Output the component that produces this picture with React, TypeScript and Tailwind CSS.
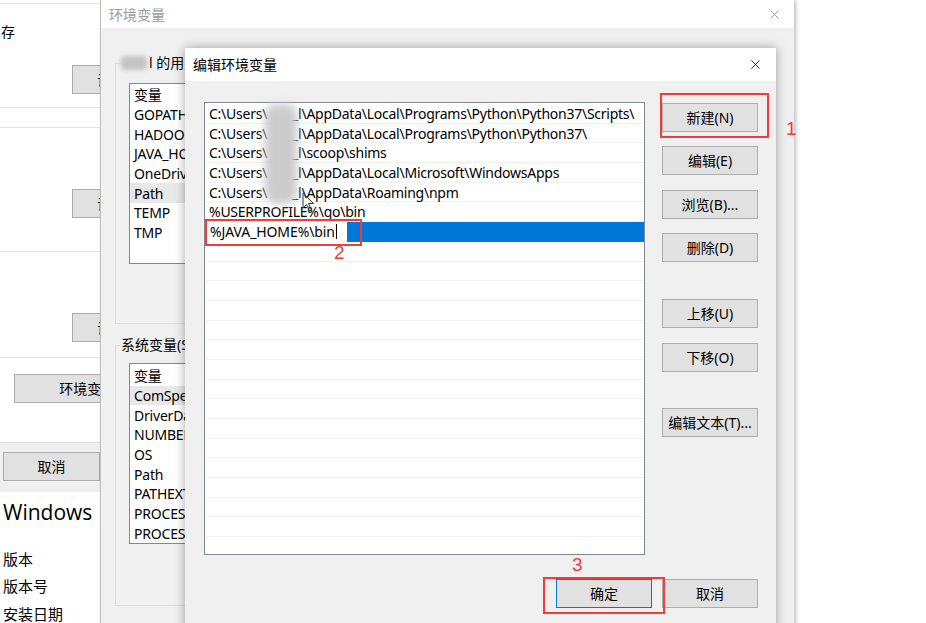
import { X } from "lucide-react";

const ui = "font-['Segoe_UI','Noto_Sans','Noto_Sans_CJK_SC',sans-serif]";

const userVars = ["变量", "GOPATH", "HADOOP_HOME", "JAVA_HOME", "OneDrive", "Path", "TEMP", "TMP"];
const sysVars = ["变量", "ComSpec", "DriverData", "NUMBER_OF_PROCESSORS", "OS", "Path", "PATHEXT", "PROCESSOR_ARCHITECTURE", "PROCESSOR_IDENTIFIER"];

const paths: { before: string; after: string }[] = [
  { before: "C:\\Users\\", after: "_l\\AppData\\Local\\Programs\\Python\\Python37\\Scripts\\" },
  { before: "C:\\Users\\", after: "_l\\AppData\\Local\\Programs\\Python\\Python37\\" },
  { before: "C:\\Users\\", after: "_l\\scoop\\shims" },
  { before: "C:\\Users\\", after: "_l\\AppData\\Local\\Microsoft\\WindowsApps" },
  { before: "C:\\Users\\", after: "_l\\AppData\\Roaming\\npm" },
  { before: "%USERPROFILE%\\go\\bin", after: "" },
];

function WinButton({ label, className = "" }: { label: string; className?: string }) {
  return (
    <div
      className={`flex items-center justify-center h-[29px] bg-[#e1e1e1] border border-[#adadad] text-[14px] text-black whitespace-nowrap ${className}`}
    >
      {label}
    </div>
  );
}

function LeftWindow() {
  return (
    <div className="absolute left-0 top-0 w-[200px] bg-white flex flex-col text-black">
      <div className="shrink-0 h-[4px] border-b border-[#e6e6e6]" />
      <div className="shrink-0 h-[104px] border-b border-[#e6e6e6] relative">
        <div className="ml-[-13px] mt-[17px] text-[14px] whitespace-nowrap">内存</div>
        <WinButton label="设置(S)..." className="absolute left-[72px] top-[61px] w-[106px]" />
      </div>
      <div className="shrink-0 h-[20px] border-b border-[#e6e6e6]" />
      <div className="shrink-0 h-[124px] border-b border-[#e6e6e6] relative">
        <WinButton label="设置(E)..." className="absolute left-[72px] top-[61px] w-[106px]" />
      </div>
      <div className="shrink-0 h-[106px] border-b border-[#e6e6e6] relative">
        <WinButton label="设置(T)..." className="absolute left-[72px] top-[61px] w-[106px]" />
      </div>
      <div className="shrink-0 h-[85px] border-b border-[#dcdcdc] pt-[16px] pl-[14px]">
        <WinButton label="环境变量(N)..." className="w-[177px]" />
      </div>
      <div className="shrink-0 h-[49px] bg-[#f0f0f0] pt-[9px] pl-[3px]">
        <WinButton label="取消" className="w-[97px]" />
      </div>
      <div className="shrink-0 pl-[3px] pt-[6px]">
        <div className="text-[21px] leading-[28px] font-['Open_Sans',sans-serif]">Windows</div>
        <div className="mt-[20px] text-[15px] leading-[27px]">版本</div>
        <div className="text-[15px] leading-[27px]">版本号</div>
        <div className="text-[15px] leading-[28px]">安装日期</div>
      </div>
    </div>
  );
}

function VarList({ items, hot, top }: { items: string[]; hot: number; top: string }) {
  return (
    <div className={`ml-[13px] w-[560px] h-[181px] bg-white border border-[#828790] ${top}`}>
      {items.map((v, i) => (
        <div
          key={i}
          className={`h-[19.7px] flex items-center pl-[4px] text-[14px] tracking-[-0.2px] ${i === hot ? "bg-[#e8e8e8]" : ""}`}
        >
          {v}
        </div>
      ))}
    </div>
  );
}

function BackDialog() {
  return (
    <div className="absolute left-[100px] top-0 w-[694px] h-[640px] bg-[#f0f0f0] border-l border-[#bdbdbd] shadow-[2px_0_4px_rgba(0,0,0,0.25)] flex flex-col">
      <div className="shrink-0 h-[28px] bg-white flex items-center justify-between pl-[8px] pr-[12px]">
        <span className="text-[14px] text-[#9a9a9a]">环境变量</span>
        <X className="w-[15px] h-[15px] text-[#8a8a8a]" strokeWidth={1.2} />
      </div>
      <div className="shrink-0 relative ml-[14px] mt-[35px] w-[620px] h-[261px] border border-[#dcdcdc]">
        <div className="absolute left-[5px] top-[-11px] bg-[#f0f0f0] pr-[2px] text-[14px] leading-[20px] flex items-center">
          <span className="inline-block w-[26px] h-[14px] mr-[2px] rounded-sm bg-[#c4c4c4] blur-[2px]" />
          l 的用户变量(U)
        </div>
        <VarList items={userVars} hot={5} top="mt-[19px] pt-[1px]" />
      </div>
      <div className="shrink-0 relative ml-[14px] mt-[21px] w-[620px] h-[261px] border border-[#dcdcdc]">
        <div className="absolute left-[5px] top-[-11px] bg-[#f0f0f0] pr-[2px] text-[14px] leading-[20px]">系统变量(S)</div>
        <VarList items={sysVars} hot={1} top="mt-[17px] pt-[2px]" />
      </div>
    </div>
  );
}

function FrontDialog() {
  const emptyRows = Array.from({ length: 16 });
  return (
    <div className="absolute left-[185px] top-[48px] w-[591px] h-[600px] bg-[#f0f0f0] shadow-[0_0_10px_rgba(0,0,0,0.35)] flex flex-col">
      <div className="shrink-0 h-[33px] bg-white flex items-center justify-between pl-[8px] pr-[13px]">
        <span className="text-[14px] text-black">编辑环境变量</span>
        <X className="w-[15px] h-[15px] text-black" strokeWidth={1.3} />
      </div>
      <div className="shrink-0 flex gap-[17px] pl-[19px] pt-[21px]">
        <div className="w-[441px] h-[453px] bg-white border border-[#828790] pt-[1px] overflow-hidden">
          {paths.map((p, i) => (
            <div key={i} className="h-[19.7px] flex items-center pl-[4px] border-b border-[#f1f1f1] text-[14px] tracking-[-0.25px] whitespace-nowrap">
              <span className="shrink-0">{p.before}</span>
              {p.after && <span className="inline-block w-[25px] shrink-0" />}
              {p.after && <span className="shrink-0">{p.after}</span>}
            </div>
          ))}
          <div className="h-[19.7px] flex bg-[#0078d7]">
            <div className="ml-[2px] w-[140px] h-full bg-white flex items-center pl-[3px] text-[14px] tracking-[-0.1px]">
              %JAVA_HOME%\bin<span className="inline-block w-px h-[15px] bg-black ml-[1px]" />
            </div>
          </div>
          {emptyRows.map((_, i) => (
            <div key={i} className="h-[19.7px] border-b border-[#f1f1f1]" />
          ))}
        </div>
        <div className="w-[96px] flex flex-col pt-[1px]">
          <WinButton label="新建(N)" />
          <WinButton label="编辑(E)" className="mt-[14px]" />
          <WinButton label="浏览(B)..." className="mt-[15px]" />
          <WinButton label="删除(D)" className="mt-[14px]" />
          <WinButton label="上移(U)" className="mt-[37px]" />
          <WinButton label="下移(O)" className="mt-[15px]" />
          <WinButton label="编辑文本(T)..." className="mt-[36px]" />
        </div>
      </div>
      <div className="shrink-0 flex justify-end gap-[10px] pr-[18px] mt-[24px]">
        <div className="w-[96px] h-[29px] flex items-center justify-center bg-[#e1e1e1] border border-[#0078d7] text-[14px]">确定</div>
        <WinButton label="取消" className="w-[96px]" />
      </div>
    </div>
  );
}

export default function App() {
  return (
    <div className={`relative w-[926px] h-[623px] overflow-hidden bg-white text-black ${ui}`}>
      <LeftWindow />
      <BackDialog />
      <FrontDialog />

      {/* blurred username */}
      <div className="absolute left-[265px] top-[104px] w-[32px] h-[100px] rounded-[10px] bg-[#cbcbcb] blur-[4px]" />

      {/* mouse pointer */}
      <svg className="absolute left-[302px] top-[192px]" width="14" height="21" viewBox="0 0 14 21">
        <path d="M1 1 L1 16 L4.5 12.5 L7.5 19 L9.5 18 L6.5 11.5 L11.5 11.5 Z" fill="none" stroke="#333" strokeWidth="1" />
      </svg>

      {/* annotations */}
      <div className="absolute left-[660px] top-[93px] w-[109px] h-[45px] border-2 border-[#f23b3b]" />
      <div className="absolute left-[786px] top-[117px] text-[19px] leading-[24px] text-[#f23b3b] font-['Liberation_Sans',sans-serif]">1</div>
      <div className="absolute left-[205px] top-[219px] w-[157px] h-[27px] border-2 border-[#f23b3b]" />
      <div className="absolute left-[334px] top-[241px] text-[19px] leading-[24px] text-[#f23b3b] font-['Liberation_Sans',sans-serif]">2</div>
      <div className="absolute left-[572px] top-[553px] text-[19px] leading-[24px] text-[#f23b3b] font-['Liberation_Sans',sans-serif]">3</div>
      <div className="absolute left-[543px] top-[577px] w-[122px] h-[37px] border-2 border-[#f23b3b]" />
    </div>
  );
}
